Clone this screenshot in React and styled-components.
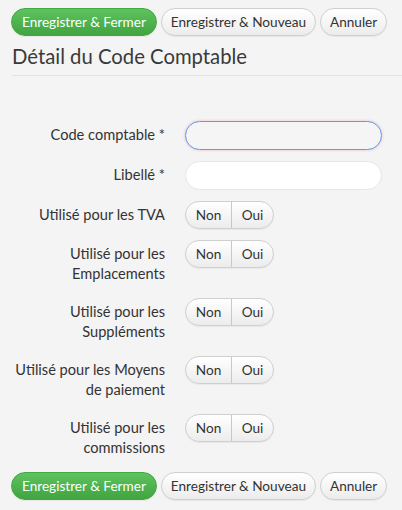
import React from 'react';
import styled, { createGlobalStyle } from 'styled-components';

const GlobalStyle = createGlobalStyle`
  html, body {
    margin: 0;
    padding: 0;
    background: #f4f4f4;
  }
  body {
    font-family: Lato, 'Open Sans', sans-serif;
    color: #333;
  }
`;

const Page = styled.div`
  width: 402px;
  height: 510px;
  overflow: hidden;
  padding: 8px 0 0 11px;
  box-sizing: border-box;
`;

const Toolbar = styled.div`
  display: flex;
  gap: 4px;
`;

const Button = styled.button`
  height: 28px;
  padding: 0 ${({ $primary }) => ($primary ? '10px' : '9px')};
  border-radius: 14px;
  font-family: inherit;
  font-size: 13.6px;
  cursor: pointer;
  border: 1px solid ${({ $primary }) => ($primary ? '#43a843' : '#cfcfcf')};
  color: ${({ $primary }) => ($primary ? '#fff' : '#333')};
  background: ${({ $primary }) =>
    $primary
      ? 'linear-gradient(#5ec25e, #40a540)'
      : 'linear-gradient(#ffffff, #ececec)'};
  box-shadow: 0 1px 1px rgba(0, 0, 0, 0.06);
  white-space: nowrap;
`;

const Title = styled.h2`
  margin: 7px 0 0 1px;
  font-size: 20.3px;
  font-weight: 400;
  line-height: 26px;
  color: #3a3a3a;
`;

const Divider = styled.hr`
  margin: 6px 0 0 1px;
  border: 0;
  border-top: 1px solid #e3e3e3;
`;

const Form = styled.div`
  display: grid;
  grid-template-columns: 154px 197px;
  column-gap: 20px;
  row-gap: 11px;
  margin-top: 45px;
  margin-bottom: 11px;
  align-items: start;
`;

const Label = styled.label`
  text-align: right;
  font-size: 14.6px;
  line-height: 20px;
  padding: ${({ $input }) => ($input ? '4px 0 4px' : '4px 0 3px')};
  white-space: nowrap;
`;

const Input = styled.input`
  height: 29px;
  box-sizing: border-box;
  width: 100%;
  border-radius: 15px;
  font-family: inherit;
  font-size: 14px;
  padding: 0 12px;
  outline: none;
  border: 1px solid ${({ $focus }) => ($focus ? '#5b9ee8' : '#e6e6e6')};
  background: ${({ $focus }) => ($focus ? '#f5f5f5' : '#fff')};
  box-shadow: ${({ $focus }) =>
    $focus ? '0 0 3px rgba(240, 120, 120, 0.45)' : 'none'};
`;

const Toggle = styled.div`
  display: inline-flex;
  height: 28px;
  box-sizing: border-box;
  border: 1px solid #cfcfcf;
  border-radius: 14px;
  overflow: hidden;
  justify-self: start;
  background: linear-gradient(#ffffff, #ececec);
  box-shadow: 0 1px 1px rgba(0, 0, 0, 0.05);
`;

const ToggleOption = styled.span`
  display: flex;
  align-items: center;
  justify-content: center;
  width: ${({ $w }) => $w}px;
  font-size: 13.6px;
  color: #333;
  & + & {
    border-left: 1px solid #c8c8c8;
  }
`;

const fields = [
  { label: ['Utilisé pour les TVA'] },
  { label: ['Utilisé pour les', 'Emplacements'] },
  { label: ['Utilisé pour les', 'Suppléments'] },
  { label: ['Utilisé pour les Moyens', 'de paiement'] },
  { label: ['Utilisé pour les', 'commissions'] },
];

const Actions = () => (
  <Toolbar>
    <Button $primary>Enregistrer &amp; Fermer</Button>
    <Button>Enregistrer &amp; Nouveau</Button>
    <Button>Annuler</Button>
  </Toolbar>
);

export default function App() {
  return (
    <Page>
      <GlobalStyle />
      <Actions />
      <Title>Détail du Code Comptable</Title>
      <Divider />
      <Form>
        <Label $input>Code comptable *</Label>
        <Input $focus />
        <Label $input>Libellé *</Label>
        <Input />
        {fields.map((f, i) => (
          <React.Fragment key={i}>
            <Label>
              {f.label.map((l, j) => (
                <React.Fragment key={j}>
                  {j > 0 && <br />}
                  {l}
                </React.Fragment>
              ))}
            </Label>
            <Toggle>
              <ToggleOption $w={45}>Non</ToggleOption>
              <ToggleOption $w={41}>Oui</ToggleOption>
            </Toggle>
          </React.Fragment>
        ))}
      </Form>
      <Actions />
    </Page>
  );
}
